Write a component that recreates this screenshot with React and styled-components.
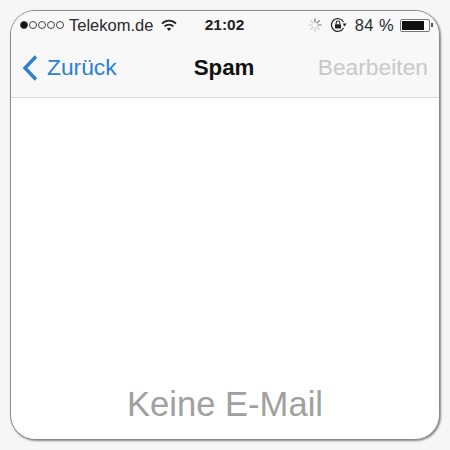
import React from "react";
import styled, { createGlobalStyle } from "styled-components";

const GlobalStyle = createGlobalStyle`
  html, body {
    margin: 0;
    padding: 0;
    background: #f6f6f6;
  }
`;

const Page = styled.div`
  width: 450px;
  height: 450px;
  box-sizing: border-box;
  padding: 10px;
  background: #f6f6f6;
  font-family: "Liberation Sans", Arial, sans-serif;
`;

const Screen = styled.div`
  height: 100%;
  box-sizing: border-box;
  display: flex;
  flex-direction: column;
  background: #fff;
  border: 1px solid #8a8a8a;
  border-radius: 25px;
  box-shadow: 1px 1px 2px rgba(0, 0, 0, 0.45);
  overflow: hidden;
`;

const Header = styled.div`
  background: #f8f8f8;
  border-bottom: 1px solid #dcdcdc;
  height: 87px;
  box-sizing: border-box;
  flex: none;
`;

const StatusBar = styled.div`
  display: grid;
  grid-template-columns: 1fr auto 1fr;
  align-items: center;
  height: 28px;
  padding: 0 6px 0 9px;
  font-size: 16.5px;
  color: #2b2b2b;
`;

const Carrier = styled.div`
  display: flex;
  align-items: center;
`;

const Dots = styled.div`
  display: flex;
  gap: 1px;
  margin-right: 5px;
`;

const Dot = styled.span`
  width: 8px;
  height: 8px;
  box-sizing: border-box;
  border-radius: 50%;
  border: 1px solid #444;
  background: ${(p) => (p.$on ? "#111" : "transparent")};
`;

const Time = styled.div`
  font-weight: 700;
  font-size: 15.5px;
  color: #222;
  margin-right: 4px;
`;

const StatusRight = styled.div`
  display: flex;
  align-items: center;
  justify-content: flex-end;
`;

const Percent = styled.span`
  margin: 0 6px 0 8px;
  letter-spacing: 0.4px;
`;

const Battery = styled.div`
  display: flex;
  align-items: center;
`;

const BatteryBody = styled.div`
  width: 30px;
  height: 13px;
  box-sizing: border-box;
  border: 1px solid #777;
  border-radius: 2px;
  padding: 1px;
  background: #fff;
`;

const BatteryLevel = styled.div`
  height: 100%;
  background: #111;
`;

const BatteryTip = styled.div`
  width: 2px;
  height: 4px;
  background: #555;
  margin-left: 1px;
`;

const NavBar = styled.div`
  display: grid;
  grid-template-columns: 1fr auto 1fr;
  align-items: center;
  height: 57px;
  padding: 0 11px;
  font-size: 22.8px;
`;

const BackLink = styled.div`
  display: flex;
  align-items: center;
  gap: 9px;
  color: #2b80d2;
`;

const Title = styled.div`
  font-weight: 700;
  color: #111;
  font-size: 22.3px;
  margin-right: 2px;
`;

const EditLink = styled.div`
  text-align: right;
  color: #c9c9c9;
`;

const Body = styled.div`
  flex: 1;
  display: flex;
  align-items: flex-end;
  justify-content: center;
  padding-bottom: 14px;
`;

const EmptyText = styled.div`
  font-size: 34.6px;
  line-height: 41px;
  color: #a0a0a0;
`;

const WifiIcon = () => (
  <svg width="16" height="13" viewBox="0 0 16 13" style={{ marginLeft: 8 }}>
    <path d="M1 4.6 C5 0.6 11 0.6 15 4.6" fill="none" stroke="#222" strokeWidth="1.7" />
    <path d="M3.5 7.3 C6 5 10 5 12.5 7.3" fill="none" stroke="#222" strokeWidth="1.7" />
    <path d="M8 12 L5.8 9.6 C7 8.6 9 8.6 10.2 9.6 Z" fill="#222" />
  </svg>
);

const Spinner = () => (
  <svg width="14" height="14" viewBox="0 0 14 14" style={{ marginRight: 8 }}>
    {[0, 45, 90, 135, 180, 225, 270, 315].map((a, i) => (
      <line
        key={a}
        x1="7"
        y1="0.5"
        x2="7"
        y2="4.5"
        stroke={i < 3 ? "#777" : "#c8c8c8"}
        strokeWidth="1.2"
        transform={`rotate(${a} 7 7)`}
      />
    ))}
  </svg>
);

const RotationLock = () => (
  <svg width="17" height="16" viewBox="0 0 17 16">
    <path d="M13.5 11 A6.4 6.4 0 1 1 13.5 5" fill="none" stroke="#222" strokeWidth="1.2" />
    <path d="M12.6 6.6 L16.6 6.6 L14.6 9.4 Z" fill="#222" />
    <rect x="5" y="7.2" width="6" height="4.4" rx="0.6" fill="#222" />
    <path d="M6.2 7.2 V5.8 A1.8 1.8 0 0 1 9.8 5.8 V7.2" fill="none" stroke="#222" strokeWidth="1.1" />
  </svg>
);

const BackChevron = () => (
  <svg width="16" height="26" viewBox="0 0 16 26">
    <path d="M14 1.5 L3 13 L14 24.5" fill="none" stroke="#2b80d2" strokeWidth="3.4" />
  </svg>
);

export default function App() {
  return (
    <>
      <GlobalStyle />
      <Page>
        <Screen>
          <Header>
            <StatusBar>
              <Carrier>
                <Dots>
                  {[true, false, false, false, false].map((on, i) => (
                    <Dot key={i} $on={on} />
                  ))}
                </Dots>
                Telekom.de
                <WifiIcon />
              </Carrier>
              <Time>21:02</Time>
              <StatusRight>
                <Spinner />
                <RotationLock />
                <Percent>84 %</Percent>
                <Battery>
                  <BatteryBody>
                    <BatteryLevel style={{ width: "84%" }} />
                  </BatteryBody>
                  <BatteryTip />
                </Battery>
              </StatusRight>
            </StatusBar>
            <NavBar>
              <BackLink>
                <BackChevron />
                Zurück
              </BackLink>
              <Title>Spam</Title>
              <EditLink>Bearbeiten</EditLink>
            </NavBar>
          </Header>
          <Body>
            <EmptyText>Keine E-Mail</EmptyText>
          </Body>
        </Screen>
      </Page>
    </>
  );
}
